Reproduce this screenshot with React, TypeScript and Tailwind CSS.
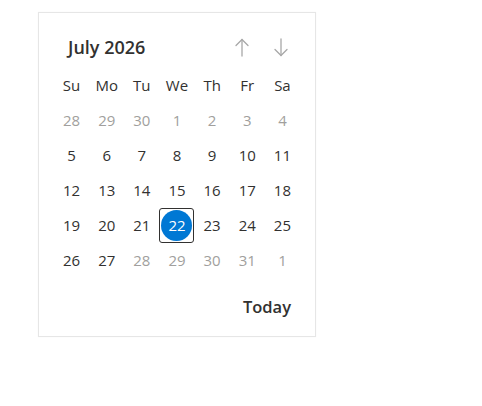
import React from "react";

const weekDays = ["Su", "Mo", "Tu", "We", "Th", "Fr", "Sa"];

// July 2026, days outside 5..27 are out of range
const weeks = [
  [28, 29, 30, 1, 2, 3, 4],
  [5, 6, 7, 8, 9, 10, 11],
  [12, 13, 14, 15, 16, 17, 18],
  [19, 20, 21, 22, 23, 24, 25],
  [26, 27, 28, 29, 30, 31, 1],
];

const ArrowUp = () => (
  <svg width="14" height="19" viewBox="0 0 14 19" fill="none" stroke="currentColor" strokeWidth="1.3" strokeLinecap="round" strokeLinejoin="round">
    <path d="M7 1.5V18" />
    <path d="M1 7.5L7 1.5L13 7.5" />
  </svg>
);

const ArrowDown = () => (
  <svg width="14" height="19" viewBox="0 0 14 19" fill="none" stroke="currentColor" strokeWidth="1.3" strokeLinecap="round" strokeLinejoin="round">
    <path d="M7 1V17.5" />
    <path d="M1 11.5L7 17.5L13 11.5" />
  </svg>
);

export default function App() {
  return (
    <div className="min-h-screen bg-white pt-3 pl-[38px]" style={{ fontFamily: '"Open Sans", "Noto Sans", sans-serif' }}>
      <div className="w-[278px] border border-[#e6e6e6] bg-white px-[15px] pt-4 pb-[17px] text-[#323130] shadow-[0_0_1px_rgba(0,0,0,0.06)]">
        <div className="flex h-9 items-center justify-between">
          <span className="pl-[14px] text-[18px] font-semibold">July 2026</span>
          <div className="flex gap-[5px] pr-[2px] text-[#a8a8a8]">
            <button className="flex h-[34px] w-[34px] items-center justify-center">
              <ArrowUp />
            </button>
            <button className="flex h-[34px] w-[34px] items-center justify-center">
              <ArrowDown />
            </button>
          </div>
        </div>
        <div className="mt-[3px] grid grid-cols-7">
          {weekDays.map((d) => (
            <div key={d} className="flex h-[35px] items-center justify-center text-[15px]">
              {d}
            </div>
          ))}
          {weeks.map((week, wi) =>
            week.map((day, di) => {
              const outside = wi === 0 || (wi === 4 && di > 1);
              const selected = wi === 3 && day === 22;
              return (
                <div key={`${wi}-${di}`} className="flex h-[35px] items-center justify-center text-[15px]">
                  {selected ? (
                    <div className="flex h-[35px] w-[35px] items-center justify-center rounded-[3px] border border-[#323130]">
                      <div className="flex h-[31px] w-[31px] items-center justify-center rounded-full bg-[#0078d4] text-white">
                        {day}
                      </div>
                    </div>
                  ) : (
                    <span className={outside ? "text-[#a19f9d]" : ""}>{day}</span>
                  )}
                </div>
              );
            })
          )}
        </div>
        <div className="mt-[17px] flex justify-end pr-[9px]">
          <button className="text-[16.5px] font-semibold leading-6">Today</button>
        </div>
      </div>
    </div>
  );
}
